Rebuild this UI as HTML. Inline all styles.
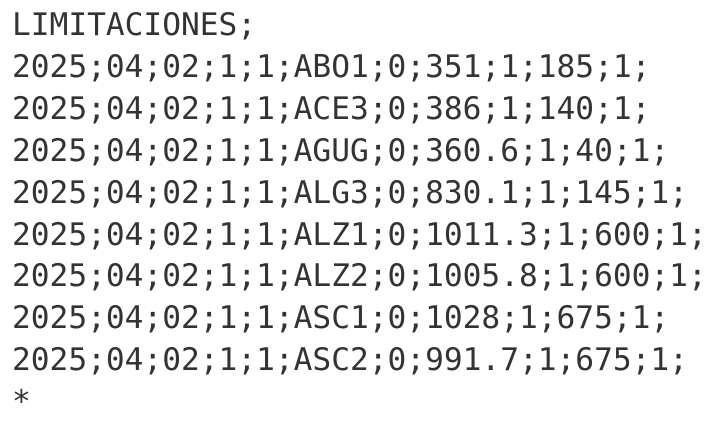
<!DOCTYPE html>
<html><head><meta charset="utf-8"><style>
html,body{margin:0;padding:0;background:#fff;width:710px;height:423px;overflow:hidden}
pre{margin:0;padding:5px 0 0 12px;font-family:"DejaVu Sans Mono","Liberation Mono",monospace;font-size:31.2px;line-height:41.9px;color:#333;white-space:pre}
</style></head><body><pre>LIMITACIONES;
2025;04;02;1;1;ABO1;0;351;1;185;1;
2025;04;02;1;1;ACE3;0;386;1;140;1;
2025;04;02;1;1;AGUG;0;360.6;1;40;1;
2025;04;02;1;1;ALG3;0;830.1;1;145;1;
2025;04;02;1;1;ALZ1;0;1011.3;1;600;1;
2025;04;02;1;1;ALZ2;0;1005.8;1;600;1;
2025;04;02;1;1;ASC1;0;1028;1;675;1;
2025;04;02;1;1;ASC2;0;991.7;1;675;1;
*</pre></body></html>
